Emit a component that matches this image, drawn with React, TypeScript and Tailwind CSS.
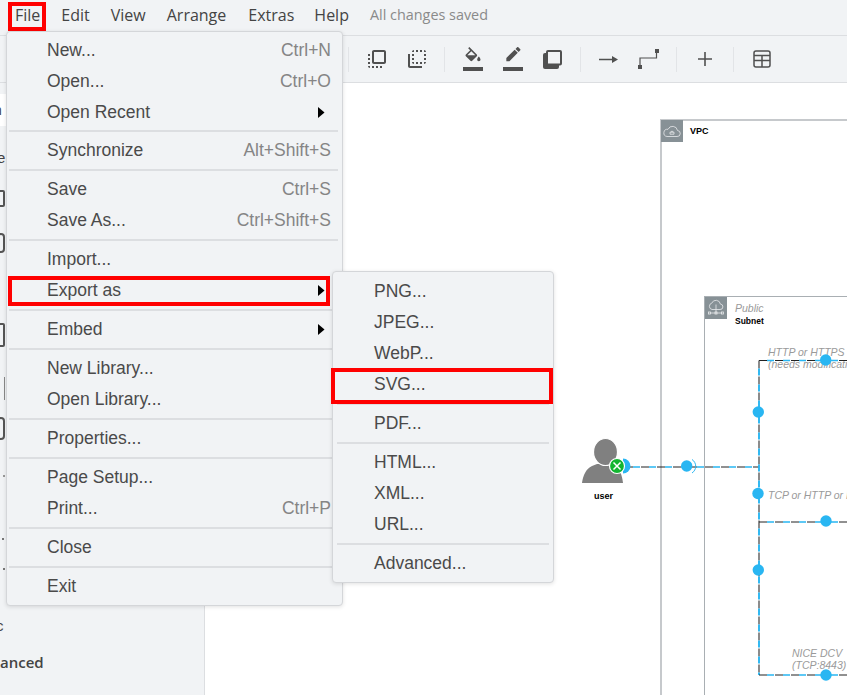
import React from 'react';

const SANS = 'font-["Liberation_Sans",Arial,sans-serif]';
const NOTE = `absolute whitespace-nowrap text-[10.5px] italic leading-[12px] text-[#9a9a9a] ${SANS}`;

type Row = { label: string; shortcut?: string; sub?: boolean; box?: string } | 'sep' | 'thin';

const fileMenu: Row[] = [
  { label: 'New...', shortcut: 'Ctrl+N' },
  { label: 'Open...', shortcut: 'Ctrl+O' },
  { label: 'Open Recent', sub: true },
  'thin',
  { label: 'Synchronize', shortcut: 'Alt+Shift+S' },
  'sep',
  { label: 'Save', shortcut: 'Ctrl+S' },
  { label: 'Save As...', shortcut: 'Ctrl+Shift+S' },
  'sep',
  { label: 'Import...' },
  { label: 'Export as', sub: true, box: 'left-[-1px] right-[10px] top-[1px] h-[30px]' },
  'sep',
  { label: 'Embed', sub: true },
  'sep',
  { label: 'New Library...' },
  { label: 'Open Library...' },
  'sep',
  { label: 'Properties...' },
  'sep',
  { label: 'Page Setup...' },
  { label: 'Print...', shortcut: 'Ctrl+P' },
  'sep',
  { label: 'Close' },
  'sep',
  { label: 'Exit' },
];

const exportMenu: Row[] = [
  { label: 'PNG...' },
  { label: 'JPEG...' },
  { label: 'WebP...' },
  { label: 'SVG...', box: 'left-[-2px] right-0 top-[-1px] h-[36px]' },
  'sep',
  { label: 'PDF...' },
  'sep',
  { label: 'HTML...' },
  { label: 'XML...' },
  { label: 'URL...' },
  'sep',
  { label: 'Advanced...' },
];

const Icon = ({ d }: { d: string }) => (
  <svg width="24" height="24" viewBox="0 0 24 24" fill="#505050">
    <path d={d} />
  </svg>
);

const BarIcon = ({ d }: { d: string }) => (
  <svg width="20" height="24" viewBox="0 0 24 28.8" fill="#505050">
    <path d={d} />
    <rect x="0" y="24" width="24" height="4.8" />
  </svg>
);

const Sep = ({ className }: { className: string }) => <div className={`h-[25px] w-px bg-[#e2e4e7] ${className}`} />;

const MenuRows = ({ rows, pad, sepClass }: { rows: Row[]; pad: string; sepClass: string }) => (
  <>
    {rows.map((row, i) =>
      row === 'sep' || row === 'thin' ? (
        <div key={i} className={`${row === 'thin' ? 'mb-[3px] mt-[2px]' : 'my-[3px]'} h-[2px] bg-[#dcdee1] ${sepClass}`} />
      ) : (
        <div key={i} className={`relative flex h-[31px] items-center justify-between ${pad}`}>
          <span>{row.label}</span>
          {row.shortcut && <span className="text-[#858585]">{row.shortcut}</span>}
          {row.sub && (
            <svg width="7" height="11" viewBox="0 0 7 11" className="absolute right-[15px] top-[10px]">
              <path d="M0 0l6.5 5.5L0 11z" fill="#000" />
            </svg>
          )}
          {row.box && <div className={`absolute border-[4px] border-[#ff0000] ${row.box}`} />}
        </div>
      ),
    )}
  </>
);

const Dot = ({ x, y }: { x: number; y: number }) => <circle cx={x} cy={y} r="5.7" fill="#29b6f2" />;

const Wire = ({ d, dark = '#222', width = 1 }: { d: string; dark?: string; width?: number }) => (
  <>
    <path d={d} fill="none" stroke={dark} strokeWidth={width} strokeDasharray="8 8" />
    <path d={d} fill="none" stroke="#29b6f2" strokeWidth={width + 0.4} strokeDasharray="7 9" strokeDashoffset="-8" />
  </>
);

const Diagram = () => (
  <div className="relative min-w-0 flex-1 overflow-hidden bg-white">
    <div className="absolute left-[455px] top-[36px] h-[600px] w-[300px] border-2 border-[#c6c9cc]">
      <div className="flex h-[22px] w-[22px] -translate-x-[1px] -translate-y-[1px] items-center justify-center bg-[#879196]">
        <svg width="18" height="13" viewBox="0 0 18 13" fill="none" stroke="#e8eaec" strokeWidth="0.8">
          <path d="M4 11.5h10a3 3 0 0 0 .5-6 5 5 0 0 0-9.5-1.2A3.6 3.6 0 0 0 4 11.5z" />
          <path d="M7 9.2h4V7.2H7zM8 7.2a1 1 0 0 1 2 0" />
        </svg>
      </div>
      <span className={`absolute left-[28px] top-[4px] text-[9px] font-bold text-black ${SANS}`}>VPC</span>
    </div>
    <div className="absolute left-[499px] top-[213px] h-[500px] w-[300px] border border-[#a9afb3]">
      <div className="flex h-[22px] w-[22px] items-center justify-center bg-[#879196]">
        <svg width="18" height="18" viewBox="0 0 18 18" fill="none" stroke="#e8eaec" strokeWidth="0.8">
          <path d="M5 10.5h8a2.7 2.7 0 0 0 .4-5.4 4.5 4.5 0 0 0-8.6-1A3.3 3.3 0 0 0 5 10.5z" />
          <path d="M9 5.5v8M3 14h12" />
          <rect x="1.5" y="13" width="2" height="2" />
          <rect x="8" y="13" width="2" height="2" />
          <rect x="14.5" y="13" width="2" height="2" />
        </svg>
      </div>
      <span className={`absolute left-[30px] top-[5px] text-[10.5px] italic leading-[13px] text-[#9a9a9a] ${SANS}`}>Public</span>
      <span className={`absolute left-[30px] top-[19px] text-[8.5px] font-bold leading-[11px] text-black ${SANS}`}>Subnet</span>
    </div>

    <span className={`${NOTE} left-[563px] top-[263px]`}>HTTP or HTTPS</span>
    <span className={`${NOTE} left-[563px] top-[275px]`}>(needs modificati</span>
    <span className={`${NOTE} left-[563px] top-[406px]`}>TCP or HTTP or H</span>
    <span className={`${NOTE} left-[587px] top-[564px]`}>NICE DCV</span>
    <span className={`${NOTE} left-[587px] top-[576px]`}>(TCP:8443)</span>
    <span className={`absolute left-[389px] top-[408px] text-[9px] font-bold leading-[11px] text-black ${SANS}`}>user</span>

    <svg width="642" height="612" viewBox="205 83 642 612" className="absolute left-0 top-0">
      <Wire d="M625 467H759" />
      <Wire d="M759 360.5V675" dark="#666" width={1.5} />
      <Wire d="M759 360.5H847" />
      <Wire d="M759 522H847" />
      <Wire d="M759 675H847" />
      <path d="M582 483c1-8 4-14 10-17l5-2h14l4 2c5 3 7 9 8 17z" fill="#808080" />
      <ellipse cx="605.5" cy="452" rx="12" ry="13.5" fill="#808080" stroke="#fff" strokeWidth="1.2" />
      <path d="M622 458.5a7.5 7.5 0 0 1 0 15z" fill="#29b6f2" transform="translate(1)" />
      <circle cx="617" cy="466" r="7.5" fill="#12b530" stroke="#fff" strokeWidth="1.2" />
      <path d="M613.5 462.5l7 7m0-7l-7 7" stroke="#fff" strokeWidth="1.5" />
      <path d="M692 459.5a8 8 0 0 1 0 13.5" fill="none" stroke="#29b6f2" strokeWidth="1" />
      <Dot x={686.7} y={466} />
      <Dot x={758.3} y={412} />
      <Dot x={758} y={493.5} />
      <Dot x={825.7} y={360} />
      <Dot x={826} y={521} />
      <Dot x={758.3} y={570} />
      <Dot x={826} y={675} />
    </svg>
  </div>
);

const Sidebar = () => (
  <div className={`flex w-[205px] shrink-0 flex-col overflow-hidden border-r border-[#dcdee1] bg-[#f1f3f5] pt-[11px] text-[#444] ${SANS}`}>
    <div className="flex h-[32px] items-center bg-white text-[14px]">
      <span className="-ml-[6px]">n</span>
    </div>
    <div className="-ml-[3px] mt-[23px] text-[15px] leading-[17px]">e</div>
    <div className="-ml-[2px] mt-[24px] h-[17px] w-[7px] rounded-[2px] border-2 border-[#555]" />
    <div className="-ml-[3px] mt-[26px] h-[20px] w-[8px] rounded-full border-2 border-[#555]" />
    <div className="-ml-[2px] mt-[70px] h-[24px] w-[7px] rounded-[2px] border-2 border-[#555]" />
    <div className="ml-[4px] mt-[30px] h-[23px] w-px bg-[#888]" />
    <div className="-ml-[3px] mt-[17px] h-[23px] w-[8px] rounded-full border-2 border-[#555]" />
    <div className="ml-[3px] mt-[35px] h-[2px] w-[2px] bg-[#999]" />
    <div className="ml-[2px] mt-[61px] h-[2px] w-[2px] bg-[#777]" />
    <div className="ml-[3px] mt-[28px] h-[2px] w-[2px] bg-[#777]" />
    <div className="-ml-[4px] mt-[47px] text-[15px] leading-[17px]">c</div>
    <div className='mt-[20px] font-["Open_Sans",sans-serif] text-[15px] font-semibold leading-[17px]'>anced</div>
  </div>
);

export default function App() {
  return (
    <div className="relative flex h-[695px] w-[847px] flex-col overflow-hidden bg-white">
      <div className='flex h-[36px] shrink-0 items-center border-b border-[#dcdee1] bg-[#f1f3f5] pb-[6px] pl-[15px] font-["Open_Sans",sans-serif] text-[16px] text-[#444]'>
        <span className="relative mr-[21px]">
          File
          <div className="absolute -left-[7px] -right-[6px] -top-[1px] h-[29px] border-[4px] border-[#ff0000]" />
        </span>
        <span className="mr-[21px]">Edit</span>
        <span className="mr-[21px]">View</span>
        <span className="mr-[22px]">Arrange</span>
        <span className="mr-[20px]">Extras</span>
        <span className="mr-[21px]">Help</span>
        <span className="text-[14.4px] text-[#8a8a8a]">All changes saved</span>
      </div>

      <div className="flex h-[47px] shrink-0 items-center border-b border-[#dcdee1] bg-[#f1f3f5] pl-[348px]">
        <Sep className="" />
        <div className="ml-[16px]">
          <Icon d="M3 13h2v-2H3v2zm0 4h2v-2H3v2zm2 4v-2H3c0 1.1.89 2 2 2zM3 9h2V7H3v2zm12 12h2v-2h-2v2zm4-18H9c-1.11 0-2 .9-2 2v10c0 1.1.89 2 2 2h10c1.1 0 2-.9 2-2V5c0-1.1-.9-2-2-2zm0 12H9V5h10v10zm-8 6h2v-2h-2v2zm-4 0h2v-2H7v2z" />
        </div>
        <div className="ml-[16px]">
          <Icon d="M9 7H7v2h2V7zm0 4H7v2h2v-2zm0-8c-1.11 0-2 .9-2 2h2V3zm4 12h-2v2h2v-2zm6-12v2h2c0-1.1-.9-2-2-2zm-6 0h-2v2h2V3zM9 17v-2H7c0 1.1.89 2 2 2zm10-4h2v-2h-2v2zm0-4h2V7h-2v2zm0 8c1.1 0 2-.9 2-2h-2v2zM5 7H3v12c0 1.1.89 2 2 2h12v-2H5V7zm10-2h2V3h-2v2zm0 12h2v-2h-2v2z" />
        </div>
        <Sep className="ml-[15px]" />
        <div className="ml-[18px]">
          <BarIcon d="M16.56 8.94L7.62 0 6.21 1.41l2.38 2.38-5.15 5.15c-.59.59-.59 1.54 0 2.12l5.5 5.5c.29.29.68.44 1.06.44s.77-.15 1.06-.44l5.5-5.5c.59-.58.59-1.53 0-2.12zM5.21 10L10 5.21 14.79 10H5.21zM19 11.5s-2 2.17-2 3.5c0 1.1.9 2 2 2s2-.9 2-2c0-1.33-2-3.5-2-3.5z" />
        </div>
        <div className="ml-[20px]">
          <BarIcon d="M17.75 7L14 3.25l-10 10V17h3.75l10-10zm2.96-2.96c.39-.39.39-1.02 0-1.41L18.37.29c-.39-.39-1.02-.39-1.41 0L15 2.25 18.75 6l1.96-1.96z" />
        </div>
        <div className="ml-[20px]">
          <svg width="19" height="19" viewBox="0 0 19 19">
            <rect x="0" y="3" width="16" height="16" rx="2" fill="#505050" />
            <rect x="4" y="1" width="14" height="13.5" rx="1" fill="#f1f3f5" stroke="#505050" strokeWidth="2" />
          </svg>
        </div>
        <Sep className="ml-[18px]" />
        <div className="ml-[18px]">
          <svg width="19" height="7" viewBox="0 0 19 7"><path d="M0 2.7h13V0l6 3.5L13 7V4.3H0z" fill="#505050" /></svg>
        </div>
        <div className="ml-[20px]">
          <svg width="21" height="20" viewBox="0 0 21 20" fill="#505050">
            <path d="M2 18V9h16.5V2" fill="none" stroke="#505050" strokeWidth="1.2" />
            <rect x="0" y="16" width="4" height="4" />
            <rect x="17" y="0" width="4" height="4" />
          </svg>
        </div>
        <Sep className="ml-[17px]" />
        <div className="ml-[21px]">
          <svg width="14" height="14" viewBox="0 0 14 14"><path d="M6.2 0h1.6v6.2H14v1.6H7.8V14H6.2V7.8H0V6.2h6.2z" fill="#505050" /></svg>
        </div>
        <Sep className="ml-[21px]" />
        <div className="ml-[19px]">
          <svg width="18" height="18" viewBox="0 0 18 18" fill="none" stroke="#505050" strokeWidth="1.5">
            <rect x="1" y="1" width="16" height="16" rx="2" />
            <path d="M1 5.5h16M1 10.5h16M9 5.5V17" />
          </svg>
        </div>
      </div>

      <div className="flex min-h-0 flex-1">
        <Sidebar />
        <Diagram />
      </div>

      <div className={`absolute left-[6px] top-[31px] w-[337px] rounded-[4px] border border-[#d4d6d9] bg-[#f1f3f5] py-[3px] text-[17.5px] text-[#4a4a4a] shadow-[0_1px_4px_rgba(0,0,0,0.12)] ${SANS}`}>
        <MenuRows rows={fileMenu} pad="mx-[2px] pl-[38px] pr-[9px]" sepClass="ml-[2px] mr-[4px]" />
      </div>

      <div className={`absolute left-[332px] top-[271px] w-[222px] rounded-[4px] border border-[#d4d6d9] bg-[#f1f3f5] pb-[3px] pt-[4px] text-[17.5px] text-[#4a4a4a] shadow-[0_1px_4px_rgba(0,0,0,0.12)] ${SANS}`}>
        <MenuRows rows={exportMenu} pad="pl-[41px]" sepClass="mx-[4px]" />
      </div>
    </div>
  );
}
